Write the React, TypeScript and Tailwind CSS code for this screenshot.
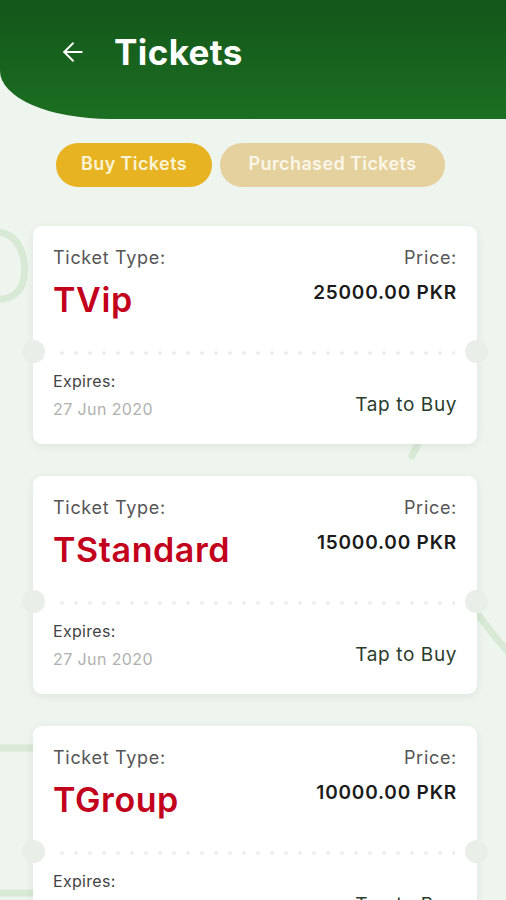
import { ArrowLeft } from "lucide-react";

interface Ticket {
  name: string;
  price: string;
  expires: string;
}

const TICKETS: Ticket[] = [
  { name: "TVip", price: "25000.00 PKR", expires: "27 Jun 2020" },
  { name: "TStandard", price: "15000.00 PKR", expires: "27 Jun 2020" },
  { name: "TGroup", price: "10000.00 PKR", expires: "27 Jun 2020" },
];

function Background() {
  return (
    <svg
      className="pointer-events-none absolute inset-0 h-full w-full"
      viewBox="0 0 506 900"
      fill="none"
      preserveAspectRatio="none"
    >
      <g stroke="#d8e9d6" strokeWidth="7" strokeLinecap="round">
        <path d="M-10 232 C 20 228, 30 262, 22 285 C 14 302, -4 300, -12 298" />
        <path d="M448 380 C 436 405, 425 428, 412 456" />
        <path d="M476 612 C 490 630, 500 645, 512 655" />
        <path d="M-10 748 L 40 748" />
        <path d="M-10 893 L 40 893" />
      </g>
    </svg>
  );
}

function TicketCard({ ticket }: { ticket: Ticket }) {
  return (
    <div className="relative h-[218px] rounded-[9px] bg-white shadow-[0_2px_10px_rgba(0,0,0,0.07)]">
      {/* notches */}
      <div className="absolute left-[-11px] top-[114px] h-[23px] w-[23px] rounded-full bg-[#e9eee9]" />
      <div className="absolute right-[-11px] top-[114px] h-[23px] w-[23px] rounded-full bg-[#e9eee9]" />

      <div className="flex h-[124px] items-start justify-between px-[20px] pt-[20px]">
        <div className="flex flex-col">
          <span className="text-[18px] leading-[24px] tracking-[0.7px] text-[#555]">Ticket Type:</span>
          <span className="mt-[10px] text-[34px] font-semibold leading-[40px] tracking-[0.6px] text-[#c3001c]">
            {ticket.name}
          </span>
        </div>
        <div className="flex flex-col items-end">
          <span className="text-[18px] leading-[24px] tracking-[0.7px] text-[#555]">Price:</span>
          <span className="mt-[11px] text-[19px] font-semibold leading-[24px] tracking-[0.8px] text-[#1b1b1b]">
            {ticket.price}
          </span>
        </div>
      </div>

      {/* dotted divider */}
      <div className="mx-[22px] h-[6px] bg-[radial-gradient(circle,#ececec_1.5px,transparent_2.1px)] bg-[length:14px_6px]" />

      <div className="flex items-end justify-between px-[20px] pt-[14px]">
        <div className="flex flex-col">
          <span className="text-[16px] leading-[22px] tracking-[0.3px] text-[#444]">Expires:</span>
          <span className="mt-[6px] text-[16px] leading-[22px] tracking-[0.4px] text-[#b0b0b0]">
            {ticket.expires}
          </span>
        </div>
        <span className="mb-[3px] text-[19px] leading-[24px] tracking-[0.6px] text-[#2a3c2c]">Tap to Buy</span>
      </div>
    </div>
  );
}

export default function App() {
  return (
    <div
      className="relative h-[900px] w-full overflow-hidden bg-[#eef4ee]"
      style={{ fontFamily: "Inter, 'Noto Sans', sans-serif" }}
    >
      <Background />

      <div className="relative">
        <header className="flex h-[119px] items-start rounded-bl-[110px_48px] bg-gradient-to-b from-[#13561a] to-[#1c6f22] pl-[58px] pt-[29px]">
          <ArrowLeft className="mt-[8px] h-[30px] w-[30px] text-white" strokeWidth={1.5} />
          <h1 className="ml-[26px] text-[35px] font-bold leading-[46px] tracking-[0.4px] text-white">Tickets</h1>
        </header>

        <div className="mt-[24px] flex gap-[8px] pl-[56px]">
          <button className="h-[44px] w-[156px] rounded-full bg-[#e7b323] pb-[3px] text-[18px] font-semibold tracking-[0.4px] text-[#fbf3d6]">
            Buy Tickets
          </button>
          <button className="h-[44px] w-[225px] rounded-full bg-[#e5d19e] pb-[3px] text-[18px] font-semibold tracking-[0.4px] text-[#fbf6e8]">
            Purchased Tickets
          </button>
        </div>

        <div className="ml-[33px] mr-[29px] mt-[39px] flex flex-col gap-[32px]">
          {TICKETS.map((t) => (
            <TicketCard key={t.name} ticket={t} />
          ))}
        </div>
      </div>
    </div>
  );
}
